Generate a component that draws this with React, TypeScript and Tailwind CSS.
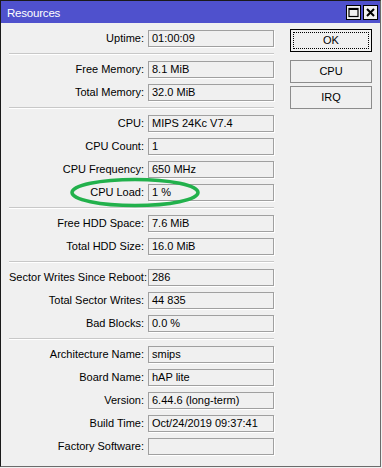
import React from "react";

const groups: [string, string][][] = [
  [["Uptime:", "01:00:09"]],
  [
    ["Free Memory:", "8.1 MiB"],
    ["Total Memory:", "32.0 MiB"],
  ],
  [
    ["CPU:", "MIPS 24Kc V7.4"],
    ["CPU Count:", "1"],
    ["CPU Frequency:", "650 MHz"],
    ["CPU Load:", "1 %"],
  ],
  [
    ["Free HDD Space:", "7.6 MiB"],
    ["Total HDD Size:", "16.0 MiB"],
  ],
  [
    ["Sector Writes Since Reboot:", "286"],
    ["Total Sector Writes:", "44 835"],
    ["Bad Blocks:", "0.0 %"],
  ],
  [
    ["Architecture Name:", "smips"],
    ["Board Name:", "hAP lite"],
    ["Version:", "6.44.6 (long-term)"],
    ["Build Time:", "Oct/24/2019 09:37:41"],
    ["Factory Software:", ""],
  ],
];

function Row({ label, value }: { label: string; value: string }) {
  return (
    <div className="flex items-center h-[17px] gap-[4px]">
      <div className="w-[135px] text-right whitespace-nowrap leading-[17px]">{label}</div>
      <div className="w-[126px] h-[17px] border border-[#a0a0a0] shadow-[1px_1px_0_#ffffff] pl-[3px] leading-[15px] whitespace-nowrap overflow-hidden">
        {value}
      </div>
    </div>
  );
}

export default function App() {
  return (
    <div className="w-[382px] h-[468px] bg-[#f0f0f0] relative text-[11px] text-black font-['Liberation_Sans',Arial,sans-serif]">
      <div className="w-[381px] h-[467px] border border-[#1a1a1a] border-r-[#6b6b6b] border-b-[#6b6b6b] flex flex-col">
        <div className="h-[22px] bg-[#4f51cd] flex items-center pl-[6px] pr-[2px]">
          <span className="text-white text-[11.5px] tracking-[-0.2px] leading-none pt-[3px]">Resources</span>
          <div className="ml-auto flex gap-[2px]">
            <div className="w-[15px] h-[15px] bg-[#f0f0f0] border border-black flex items-center justify-center">
              <svg width="11" height="11" viewBox="0 0 11 11">
                <rect x="1" y="1.5" width="9" height="8" fill="none" stroke="#000" strokeWidth="1.2" />
                <rect x="1" y="1" width="9" height="2" fill="#000" />
              </svg>
            </div>
            <div className="w-[15px] h-[15px] bg-[#f0f0f0] border border-black flex items-center justify-center">
              <svg width="11" height="11" viewBox="0 0 11 11">
                <path d="M2 2 L9 9 M9 2 L2 9" stroke="#000" strokeWidth="2" />
              </svg>
            </div>
          </div>
        </div>
        <div className="flex pt-[7px] pl-[8px]">
          <div className="w-[265px] flex flex-col">
            {groups.map((g, gi) => (
              <React.Fragment key={gi}>
                {gi > 0 && (
                  <div className="h-[2px] my-[6px] border-t border-[#c8c8c8] border-b border-b-white" />
                )}
                <div className="flex flex-col gap-[6px]">
                  {g.map(([l, v]) => (
                    <Row key={l} label={l} value={v} />
                  ))}
                </div>
              </React.Fragment>
            ))}
          </div>
          <div className="ml-[16px] w-[82px] mt-[-1px] flex flex-col">
            <div className="h-[23px] border border-black p-[2px]">
              <div className="w-full h-full border border-dotted border-black flex items-center justify-center">
                OK
              </div>
            </div>
            <div className="h-[23px] mt-[8px] border border-[#8c8c8c] flex items-center justify-center">
              CPU
            </div>
            <div className="h-[23px] mt-[3px] border border-[#8c8c8c] flex items-center justify-center">
              IRQ
            </div>
          </div>
        </div>
      </div>
      <svg className="absolute left-[68px] top-[176px]" width="134" height="34" viewBox="0 0 134 34">
        <ellipse cx="67" cy="16.5" rx="63" ry="13" fill="none" stroke="#22b14c" strokeWidth="3.5" />
      </svg>
    </div>
  );
}
